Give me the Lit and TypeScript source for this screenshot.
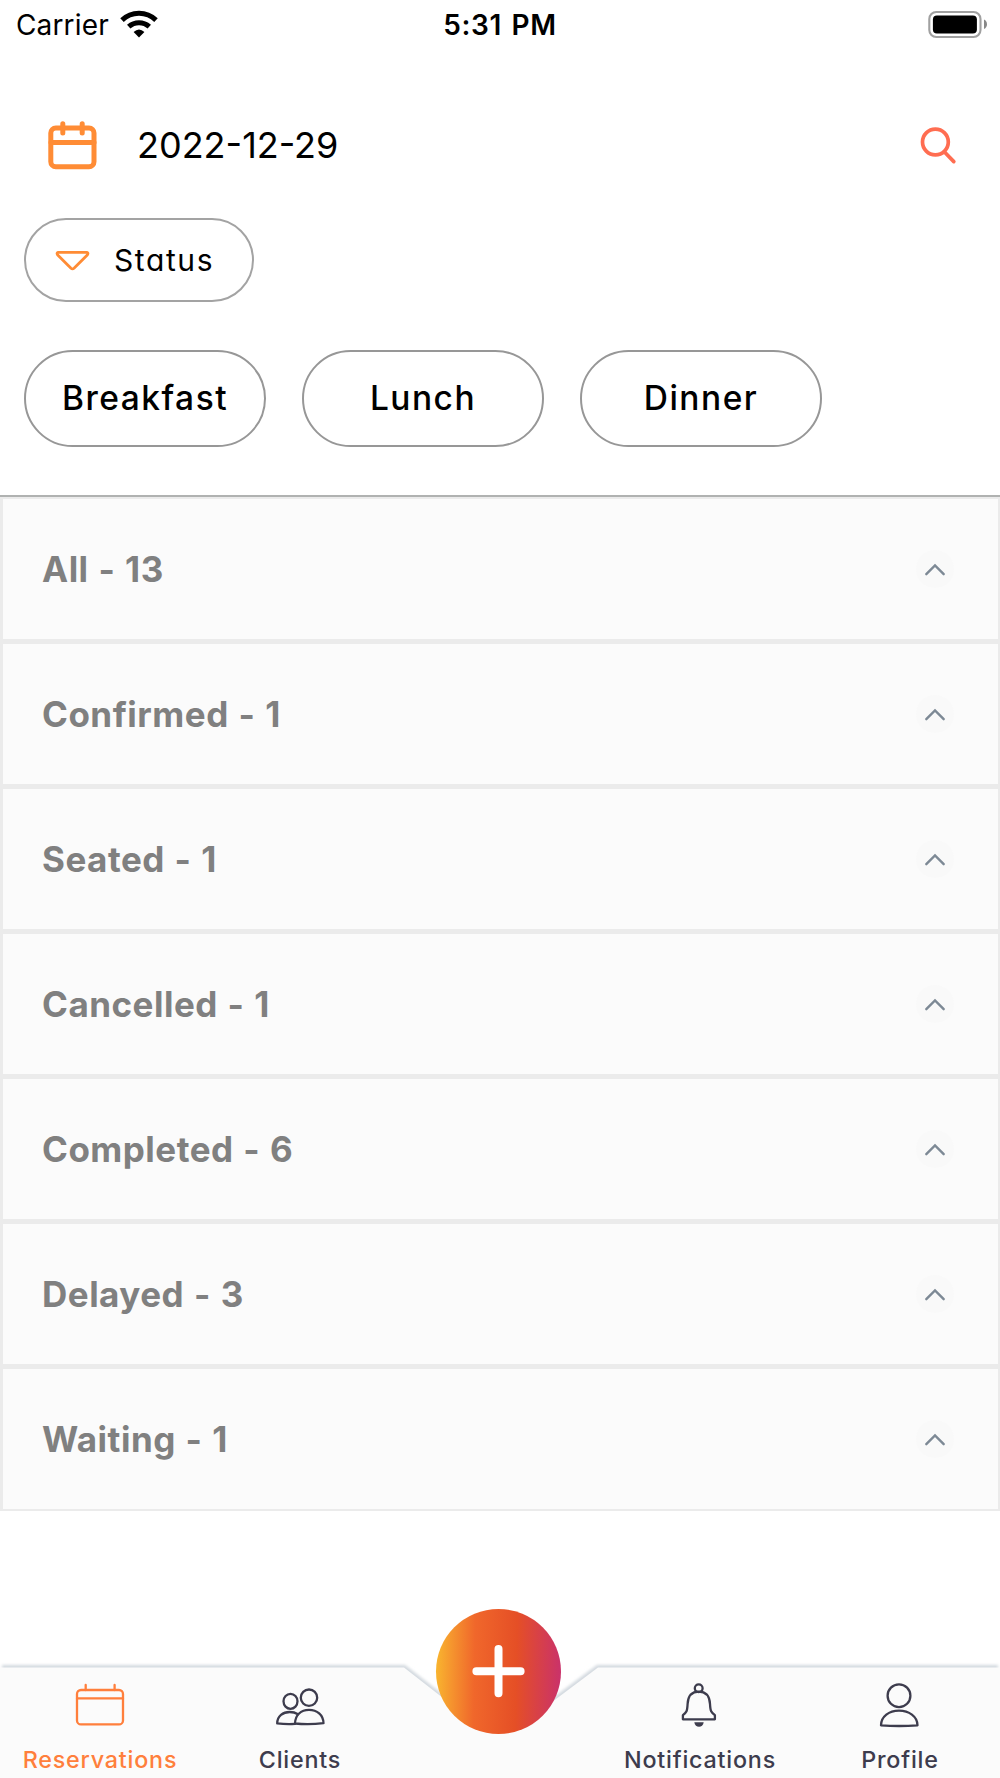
import { LitElement, html, css, svg } from "lit";
import { customElement, property } from "lit/decorators.js";

const groups = [
  { name: "All", count: 13 },
  { name: "Confirmed", count: 1 },
  { name: "Seated", count: 1 },
  { name: "Cancelled", count: 1 },
  { name: "Completed", count: 6 },
  { name: "Delayed", count: 3 },
  { name: "Waiting", count: 1 },
];

const icons = {
  reservations: svg`
    <rect x="13" y="11" width="46" height="34.4" rx="4"></rect>
    <path d="M13 19.3H59M21.7 6V11M50.6 6V11"></path>`,
  clients: svg`
    <ellipse cx="26.5" cy="22.3" rx="7" ry="7.5"></ellipse>
    <circle cx="45" cy="18.7" r="8.2"></circle>
    <path d="M13.2 44.4C13.3 37 19 33 25.7 33C29 33 31.5 33.7 34 35.2M13.2 44.4Q22 45.4 31 44.9"></path>
    <path d="M31 44.5C31.2 36 37 30.9 45 30.9C53 30.9 59.3 36 59.5 44.2Q45 45.8 31 44.5Z"></path>`,
  notifications: svg`
    <circle cx="34.7" cy="9.2" r="3.9"></circle>
    <path d="M34.7 12.7C27.5 12.7 24 17.5 23.6 25C23.2 32.5 22.6 33.3 18.9 36.2V40.3H50.9V36.2C47.1 33.3 46.4 32.5 46 25C45.6 17.5 41.9 12.7 34.7 12.7Z"></path>
    <path d="M30.3 43.3H39.7C39 49.3 31 49.3 30.3 43.3Z" fill="currentColor" stroke="none"></path>`,
  profile: svg`
    <circle cx="35" cy="16.7" r="11.4"></circle>
    <path d="M17 46.3C17.2 37.5 25 31.7 35 31.7C45 31.7 53.3 37.5 53.5 46.3Q35 47.7 17 46.3Z"></path>`,
};

@customElement("accordion-row")
class AccordionRow extends LitElement {
  @property() label = "";
  static styles = css`
    :host {
      display: flex;
      align-items: center;
      justify-content: space-between;
      height: 140px;
      padding: 0 44px 0 39px;
      box-sizing: border-box;
      background: #fbfbfb;
      color: #808080;
      font: 700 35px/44px Inter, sans-serif;
      font-feature-settings: "calt" 0;
      letter-spacing: 0.5px;
      word-spacing: 1px;
    }
    .toggle {
      width: 38px;
      height: 38px;
      border-radius: 50%;
      background: #f9f9f9;
    }
    .chevron {
      display: block;
      fill: none;
      stroke: #7d8995;
      stroke-width: 2.4;
      stroke-linecap: round;
    }
  `;
  render() {
    return html`<span>${this.label}</span>
      <span class="toggle">
        <svg class="chevron" width="38" height="38"><path d="M10.3 24.2L19 15.4L27.7 24.2"></path></svg>
      </span>`;
  }
}

@customElement("tab-item")
class TabItem extends LitElement {
  @property() label = "";
  @property() icon: keyof typeof icons = "profile";
  static styles = css`
    :host {
      display: flex;
      flex-direction: column;
      align-items: center;
      padding-top: 11px;
      font: 500 23.3px/28px Inter, sans-serif;
      letter-spacing: 0.8px;
      white-space: nowrap;
    }
    .icon {
      display: block;
      fill: none;
      stroke: currentColor;
      stroke-width: 2.3;
      stroke-linecap: round;
      stroke-linejoin: round;
    }
    .label {
      margin-top: 15px;
    }
  `;
  render() {
    return html`<svg class="icon" width="72" height="52">${icons[this.icon]}</svg>
      <span class="label">${this.label}</span>`;
  }
}

@customElement("app-root")
class AppRoot extends LitElement {
  static styles = css`
    :host {
      display: flex;
      flex-direction: column;
      height: 1778px;
      background: #fff;
      color: #000;
      font-family: Inter, sans-serif;
      overflow: hidden;
    }
    svg {
      display: block;
    }
    .status-bar {
      display: grid;
      grid-template-columns: 1fr auto 1fr;
      align-items: center;
      height: 50px;
      padding: 0 12px;
      font-size: 28px;
    }
    .carrier {
      display: flex;
      align-items: center;
      gap: 11px;
      padding-left: 4px;
      letter-spacing: 0.15px;
    }
    .wifi {
      margin-top: -2px;
    }
    .clock {
      font-weight: 600;
      letter-spacing: 0.6px;
      word-spacing: 2px;
    }
    .battery {
      justify-self: end;
      margin-top: -2px;
    }
    .date-row {
      display: flex;
      align-items: center;
      height: 60px;
      margin-top: 65px;
      padding: 0 43px 0 46px;
    }
    .date {
      flex: 1;
      margin-left: 38px;
      font-size: 36px;
      letter-spacing: 0;
    }
    .outline {
      fill: none;
      stroke-linecap: round;
      stroke-linejoin: round;
    }
    .orange {
      stroke: #ff8c35;
    }
    .coral {
      stroke: #ff6d51;
    }
    .pill {
      box-sizing: border-box;
      border: 2px solid #979797;
      border-radius: 49px;
      display: flex;
      align-items: center;
      justify-content: center;
    }
    .status-filter {
      width: 230px;
      height: 84px;
      margin: 43px 0 0 24px;
      border-color: #a3a3a3;
      justify-content: flex-start;
      padding-left: 28px;
      gap: 23px;
      font-size: 30px;
      letter-spacing: 1.6px;
      font-feature-settings: "cv11";
    }
    .meals {
      display: flex;
      gap: 36px;
      padding: 48px 24px 48px;
    }
    .meal {
      width: 242px;
      height: 97px;
      padding-bottom: 2px;
      font-size: 33.5px;
      font-weight: 500;
      letter-spacing: 1.5px;
    }
    .groups {
      display: flex;
      flex-direction: column;
      gap: 5px;
      padding: 2px 2px 2px 3px;
      background: #ebebeb;
      border-top: 2px solid #b0b2b1;
    }
    .tab-bar {
      position: relative;
      display: grid;
      grid-template-columns: repeat(5, 1fr);
      height: 110px;
      margin-top: auto;
      color: #3d3c4d;
    }
    .backdrop {
      position: absolute;
      left: 0;
      bottom: 0;
    }
    .tab {
      position: relative;
    }
    .active {
      color: #ff7f3c;
    }
    .add {
      position: absolute;
      left: 435.5px;
      top: -59.5px;
      width: 125.5px;
      height: 125.5px;
      border-radius: 50%;
      background: linear-gradient(91deg, #f9b72f 0%, #f5922e 14%, #f0672b 31%, #e54f26 64%, #c9316c 100%);
    }
    .plus {
      stroke: #fff;
      stroke-width: 8;
      stroke-linecap: round;
    }
  `;

  render() {
    return html`
      <div class="status-bar">
        <div class="carrier">
          <span>Carrier</span>
          <svg class="wifi" width="38" height="28" viewBox="0 0 38 28" fill="none" stroke="#000" stroke-width="5">
            <path d="M2 10.1A24.4 24.4 0 0 1 36 10.1M8.7 16.7A15.3 15.3 0 0 1 29.3 16.7"></path>
            <path d="M19 27.6L13.6 22Q19 17 24.4 22Z" fill="#000" stroke="none"></path>
          </svg>
        </div>
        <span class="clock">5:31 PM</span>
        <svg class="battery" width="60" height="30" viewBox="0 0 60 30">
          <rect x="1.3" y="3" width="51.2" height="25" rx="7" fill="none" stroke="#a0a0a0" stroke-width="2.1"></rect>
          <rect x="4.9" y="6.6" width="44" height="17.8" rx="4" fill="#000"></rect>
          <path d="M56 10.5Q59 12 59 15.3T56 20Z" fill="#888"></path>
        </svg>
      </div>

      <div class="date-row">
        <svg class="outline orange" width="53" height="56" stroke-width="5">
          <rect x="4.8" y="11" width="43.2" height="38.7" rx="5"></rect>
          <path d="M5 25.5H48M16.8 6.7V16M36.2 6.7V16"></path>
        </svg>
        <span class="date">2022-12-29</span>
        <svg class="outline coral" width="38" height="42" stroke-width="3.7">
          <circle cx="16.4" cy="18" r="12.9"></circle>
          <path d="M25.5 28L34.8 37.6"></path>
        </svg>
      </div>

      <div class="pill status-filter">
        <svg class="outline orange" width="37" height="26" stroke-width="2.8">
          <path d="M4.2 5.3H32.8Q34.8 6 33.3 8L20 21.2Q18.5 22.6 17 21.2L3.7 8Q2.2 6 4.2 5.3Z"></path>
        </svg>
        <span>Status</span>
      </div>

      <div class="meals">
        ${["Breakfast", "Lunch", "Dinner"].map((m) => html`<div class="pill meal">${m}</div>`)}
      </div>

      <div class="groups">
        ${groups.map((g) => html`<accordion-row label="${g.name} - ${g.count}"></accordion-row>`)}
      </div>

      <div class="tab-bar">
        <svg class="backdrop" width="1000" height="122" viewBox="0 0 1000 122">
          <defs>
            <filter id="soft" x="-2%" y="-20%" width="104%" height="140%">
              <feGaussianBlur stdDeviation="1.6"></feGaussianBlur>
            </filter>
          </defs>
          <path d="M2 9H405L450 44H550L597 9H998V130H2Z" fill="#d3d9df" filter="url(#soft)"></path>
          <path d="M0 11.6H404L452 49H548L598 11.6H1000V122H0Z" fill="#fbfbfb"></path>
        </svg>
        <tab-item class="tab active" icon="reservations" label="Reservations"></tab-item>
        <tab-item class="tab" icon="clients" label="Clients"></tab-item>
        <span></span>
        <tab-item class="tab" icon="notifications" label="Notifications"></tab-item>
        <tab-item class="tab" icon="profile" label="Profile"></tab-item>
        <div class="add">
          <svg class="plus" width="126" height="126"><path d="M40.4 62.2H84.6M62.5 40V84.2"></path></svg>
        </div>
      </div>
    `;
  }
}
